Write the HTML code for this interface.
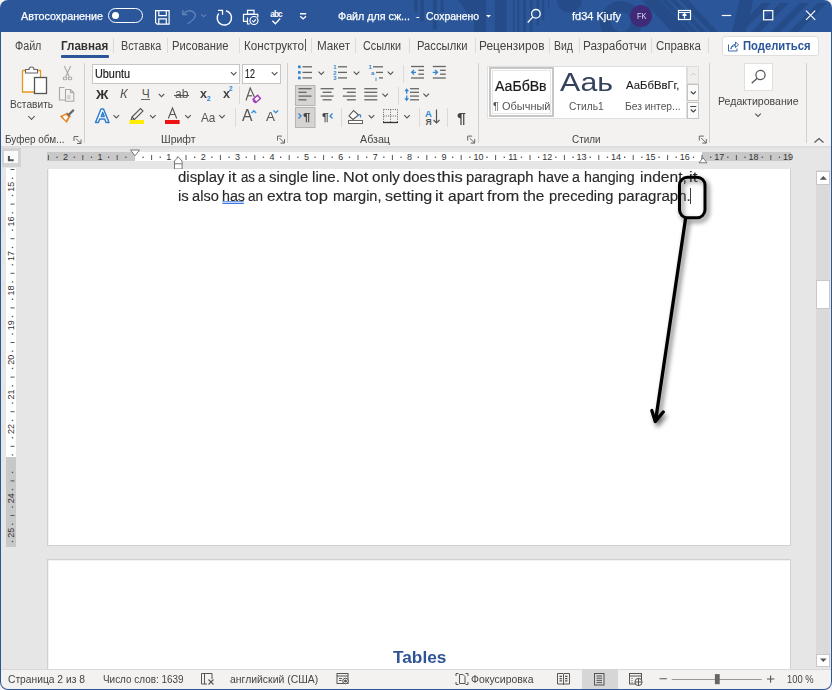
<!DOCTYPE html>
<html><head><meta charset="utf-8">
<style>

*{margin:0;padding:0;box-sizing:border-box}
html,body{width:832px;height:690px;overflow:hidden;background:#f3f3f3;font-family:"Liberation Sans",sans-serif}
.a{position:absolute}
.t{position:absolute;white-space:nowrap}
svg.i{position:absolute;overflow:visible}
.tsep{position:absolute;top:38px;width:1px;height:15px;background:#dddbd9}
.gsep{position:absolute;top:63px;width:1px;height:80px;background:#d2d0ce}
.isep{position:absolute;width:1px;background:#dcdad8}

</style></head><body>
<div class="a" style="left:0;top:0;width:832px;height:690px;background:#2b579a;border-radius:8px 8px 8px 8px"></div>
<svg class="i" style="left:0;top:0" width="832" height="32" viewBox="0 0 832 32">
<defs><clipPath id="tc"><rect x="0" y="0" width="832" height="40" rx="8"/></clipPath></defs>
<g clip-path="url(#tc)" fill="#254c89">
<rect x="414" y="0" width="3.8" height="12.6"/>
<rect x="420.2" y="0" width="3.8" height="21.5"/>
<rect x="432.8" y="0" width="4.2" height="29.6"/>
<rect x="440.4" y="0" width="3.3" height="12"/>
<path d="M458 0 H486 V32 H474 V22 Z"/>
<rect x="494.9" y="0" width="11.8" height="32"/>
<rect x="513" y="0" width="1.8" height="32"/><rect x="517" y="0" width="2.5" height="32"/><rect x="523" y="0" width="3" height="32"/>
<rect x="530" y="0" width="2.4" height="32"/><rect x="536.6" y="0" width="2.4" height="25"/><rect x="542" y="0" width="2.4" height="20"/><rect x="548" y="0" width="1.5" height="8"/>
<path d="M557 0 A12.3 12.3 0 0 0 581.6 0 Z"/>
<circle cx="621" cy="22" r="15.5" fill="none" stroke="#254c89" stroke-width="11"/>
<path d="M642 0 h18 l30 32 h-18 z"/>
<path d="M661 0 h6 l30 32 h-6 z"/><path d="M670 0 h6 l30 32 h-6 z"/><path d="M680 0 h8 l30 32 h-8 z"/>
<path d="M739.5 0 h13.5 q-3 16 -7 32 h-14.2 q4 -16 7.7 -32 z"/>
<path d="M762 3 h9 l-29 29 h-9 z"/><path d="M780 3 h9 l-29 29 h-9 z"/><path d="M800 3 h9 l-29 29 h-9 z"/><path d="M818 3 h9 l-29 29 h-9 z"/>
</g>
</svg>
<div class="a" style="left:1px;top:32px;width:830px;height:114px;background:#f3f2f1"></div>
<div class="a" style="left:1px;top:146px;width:830px;height:524px;background:#e6e6e6"></div>
<div class="t" style="left:20.60px;top:10.87px;font-size:11.5px;line-height:11.5px;color:#ffffff;font-family:'Liberation Sans',sans-serif;transform:scaleX(0.9353);transform-origin:0 0;-webkit-text-stroke:0.25px #fff;">Автосохранение</div>
<div class="a" style="left:108.2px;top:8.3px;width:34.6px;height:14.6px;border:1.3px solid #fff;border-radius:8px"></div>
<div class="a" style="left:111.8px;top:11.9px;width:7.4px;height:7.4px;background:#fff;border-radius:50%"></div>
<svg class="i" style="left:0;top:0" width="832" height="32">
<g fill="none" stroke="#fff" stroke-width="1.2">
<path d="M155.6 10.6 h13.5 v13.5 h-12 l-1.5 -1.5 z"/>
<path d="M158.8 10.6 v5 h7.5 v-5"/>
<path d="M158.8 24.1 v-5.2 h7.5 v5.2"/>
</g>
<g fill="none" stroke="#6283b8" stroke-width="1.3">
<path d="M183 14.5 C186 10.5 191 9.5 194 12.5 C197 15.5 195 19 187.5 24"/>
<path d="M182.8 10 v4.5 h4.5"/>
<path d="M201.2 14.4 l2.5 2.3 l2.5 -2.3" stroke-width="1.1"/>
</g>
<g fill="none" stroke="#fff" stroke-width="1.4">
<path d="M226 10.8 A7.2 7.2 0 1 1 218.6 13.5"/>
<path d="M218 10.3 h4.5 v4.5" stroke-width="1.3"/>
</g>
<g fill="none" stroke="#fff" stroke-width="1.2">
<rect x="247.5" y="10.3" width="6.5" height="4"/>
<path d="M247.5 21.3 h-4 v-7 h14.3 v3"/>
<path d="M247.5 17.5 v6.5 h2.5"/>
<circle cx="254" cy="20.5" r="4" fill="#2b579a"/>
<path d="M252.2 20.6 l1.3 1.3 l2.4 -2.4"/>
</g>
<text x="270.3" y="16.5" font-family="Liberation Sans" font-size="8.3" font-weight="bold" fill="#fff" textLength="12.4">abc</text>
<path d="M272.4 20.8 l3 2.9 l4.8 -5.2" fill="none" stroke="#fff" stroke-width="1.3"/>
<path d="M300 13.8 h6.2 M300.2 16.3 l2.9 2.6 l2.9 -2.6" fill="none" stroke="#fff" stroke-width="1.4"/>
<path d="M486 15 l2.5 2.5 l2.5 -2.5 z" fill="#fff"/>
<circle cx="535.9" cy="13.8" r="4.3" fill="none" stroke="#fff" stroke-width="1.3"/>
<path d="M532.9 16.9 l-5.2 5.6" stroke="#fff" stroke-width="1.3"/>
<g fill="none" stroke="#fff" stroke-width="1.2">
<rect x="678.5" y="10.5" width="12" height="9"/>
<path d="M678.5 12.5 h12 M684.5 18.5 v-5 M682.5 15.5 l2 -2 l2 2"/>
</g>
<path d="M721.8 15.5 h9.4" stroke="#fff" stroke-width="1.2"/>
<rect x="763.6" y="10.6" width="9.2" height="9.2" fill="none" stroke="#fff" stroke-width="1.2"/>
<path d="M806 10.6 l9.2 9.2 M815.2 10.6 l-9.2 9.2" stroke="#fff" stroke-width="1.2"/>
</svg>
<div class="t" style="left:338.00px;top:10.87px;font-size:11.5px;line-height:11.5px;color:#ffffff;font-family:'Liberation Sans',sans-serif;transform:scaleX(0.9294);transform-origin:0 0;-webkit-text-stroke:0.25px #fff;">Файл для сж...</div>
<div class="t" style="left:415.80px;top:10.87px;font-size:11.5px;line-height:11.5px;color:#ffffff;font-family:'Liberation Sans',sans-serif;">-</div>
<div class="t" style="left:426.00px;top:10.87px;font-size:11.5px;line-height:11.5px;color:#ffffff;font-family:'Liberation Sans',sans-serif;transform:scaleX(0.9043);transform-origin:0 0;-webkit-text-stroke:0.25px #fff;">Сохранено</div>
<div class="t" style="left:572.00px;top:10.87px;font-size:11.5px;line-height:11.5px;color:#ffffff;font-family:'Liberation Sans',sans-serif;transform:scaleX(0.9578);transform-origin:0 0;-webkit-text-stroke:0.25px #fff;">fd34 Kjufy</div>
<div class="a" style="left:630px;top:5px;width:22px;height:22px;border-radius:50%;background:#3f2a78"></div>
<div class="t" style="left:637.00px;top:11.98px;font-size:9px;line-height:9px;color:#e0d8ee;font-family:'Liberation Sans',sans-serif;transform:scaleX(0.8250);transform-origin:0 0;">FK</div>
<div class="t" style="left:15.00px;top:39.84px;font-size:12px;line-height:12px;color:#444;font-family:'Liberation Sans',sans-serif;transform:scaleX(0.8944);transform-origin:0 0;">Файл</div>
<div class="t" style="left:61.30px;top:39.84px;font-size:12px;line-height:12px;color:#333;font-weight:bold;font-family:'Liberation Sans',sans-serif;transform:scaleX(0.9690);transform-origin:0 0;">Главная</div>
<div class="a" style="left:61px;top:55px;width:48px;height:2.5px;background:#2b579a;border-radius:1px"></div>
<div class="t" style="left:120.60px;top:39.84px;font-size:12px;line-height:12px;color:#444;font-family:'Liberation Sans',sans-serif;transform:scaleX(0.9012);transform-origin:0 0;">Вставка</div>
<div class="t" style="left:172.40px;top:39.84px;font-size:12px;line-height:12px;color:#444;font-family:'Liberation Sans',sans-serif;transform:scaleX(0.9365);transform-origin:0 0;">Рисование</div>
<div class="t" style="left:243.60px;top:39.84px;font-size:12px;line-height:12px;color:#444;font-family:'Liberation Sans',sans-serif;transform:scaleX(0.9717);transform-origin:0 0;">Конструкто</div>
<div class="t" style="left:316.60px;top:39.84px;font-size:12px;line-height:12px;color:#444;font-family:'Liberation Sans',sans-serif;transform:scaleX(0.9744);transform-origin:0 0;">Макет</div>
<div class="t" style="left:362.90px;top:39.84px;font-size:12px;line-height:12px;color:#444;font-family:'Liberation Sans',sans-serif;transform:scaleX(0.9018);transform-origin:0 0;">Ссылки</div>
<div class="t" style="left:417.00px;top:39.84px;font-size:12px;line-height:12px;color:#444;font-family:'Liberation Sans',sans-serif;transform:scaleX(0.9358);transform-origin:0 0;">Рассылки</div>
<div class="t" style="left:479.00px;top:39.84px;font-size:12px;line-height:12px;color:#444;font-family:'Liberation Sans',sans-serif;transform:scaleX(0.9905);transform-origin:0 0;">Рецензиров</div>
<div class="t" style="left:553.60px;top:39.84px;font-size:12px;line-height:12px;color:#444;font-family:'Liberation Sans',sans-serif;transform:scaleX(0.8702);transform-origin:0 0;">Вид</div>
<div class="t" style="left:583.40px;top:39.84px;font-size:12px;line-height:12px;color:#444;font-family:'Liberation Sans',sans-serif;transform:scaleX(0.9809);transform-origin:0 0;">Разработчи</div>
<div class="t" style="left:656.30px;top:39.84px;font-size:12px;line-height:12px;color:#444;font-family:'Liberation Sans',sans-serif;transform:scaleX(0.9559);transform-origin:0 0;">Справка</div>
<div class="a" style="left:305px;top:39px;width:1px;height:12px;background:#555"></div>
<div class="tsep" style="left:113px"></div>
<div class="tsep" style="left:167px"></div>
<div class="tsep" style="left:239px"></div>
<div class="tsep" style="left:311px"></div>
<div class="tsep" style="left:355px"></div>
<div class="tsep" style="left:409px"></div>
<div class="tsep" style="left:475px"></div>
<div class="tsep" style="left:549px"></div>
<div class="tsep" style="left:579px"></div>
<div class="tsep" style="left:651px"></div>
<div class="tsep" style="left:708px"></div>
<div class="a" style="left:722px;top:36px;width:97px;height:20px;background:#fff;border:1px solid #e1dfdd;border-radius:3px"></div>
<div class="t" style="left:743.00px;top:39.84px;font-size:12px;line-height:12px;color:#2b579a;font-weight:bold;font-family:'Liberation Sans',sans-serif;transform:scaleX(0.9371);transform-origin:0 0;">Поделиться</div>
<svg class="i" style="left:0;top:0" width="832" height="60">
<g fill="none" stroke="#3b6aae" stroke-width="1">
<path d="M728.5 44.5 v6.5 h8.5 v-2.5"/><path d="M730.8 49 c0.4 -3 2.2 -4.6 4.7 -4.6 v-2.4 l3 2.8 l-3 2.8 v-2 c-2 0 -3.5 0.8 -4.7 3.4z"/>
</g></svg>
<svg class="i" style="left:0;top:0" width="832" height="150">
<path d="M22.5 70.5 h3 M37 70.5 h3.5 v21.5 h-18 v-21.5" fill="#fdfdfd" stroke="#e8961e" stroke-width="1.3"/>
<path d="M25.5 73 v-3.5 h3.5 a2.5 2.5 0 0 1 5 0 h3.5 v3.5 z" fill="#fdfdfd" stroke="#666" stroke-width="1.1"/>
<rect x="34.5" y="77.5" width="12" height="16" fill="#fdfdfd" stroke="#555" stroke-width="1.3"/>
<g fill="none" stroke="#a8a8a8" stroke-width="1.1">
<path d="M64.3 66 L69.3 76.8 M70.7 66 L65.7 76.8"/><ellipse cx="65" cy="78.4" rx="1.8" ry="1.4"/><ellipse cx="70" cy="78.4" rx="1.8" ry="1.4"/>
<path d="M64.5 87.5 h-5 v12.5 h5.5"/><path d="M65.5 89.5 h5 l3.3 3.3 v8.5 h-8.3 z M70.5 89.5 v3.3 h3.3"/>
</g>
<rect x="67.2" y="95" width="3.2" height="4.2" fill="#cfcfcf"/>
<path d="M73.8 109.8 L68.3 115.3" stroke="#666" stroke-width="2.3"/>
<path d="M66.5 113 l3.8 3.8" stroke="#666" stroke-width="1.5"/>
<path d="M59.8 116.2 L66.3 113.2 L70 117 L66.8 123 Z" fill="#e8861e"/>
<path d="M62.6 116.5 L66 114.9 L68.2 117.1 L65.8 120.6 Z" fill="#fff"/>
</svg>
<div class="t" style="left:10.40px;top:98.57px;font-size:11.5px;line-height:11.5px;color:#444;font-family:'Liberation Sans',sans-serif;transform:scaleX(0.8841);transform-origin:0 0;">Вставить</div>
<div class="a" style="left:29px;top:114px;width:5px;height:5px;border-right:1.2px solid #555;border-bottom:1.2px solid #555;transform:rotate(45deg)"></div>
<div class="t" style="left:5.00px;top:133.77px;font-size:11.5px;line-height:11.5px;color:#444;font-family:'Liberation Sans',sans-serif;transform:scaleX(0.8674);transform-origin:0 0;">Буфер обм...</div>
<div class="gsep" style="left:84px"></div>
<svg class="i" style="left:0;top:0" width="1" height="1"><g fill="none" stroke="#666" stroke-width="1">
<path d="M74.0 141 v-4.5 h4.5"/><path d="M76.0 138.5 l4.8 4.8 M81.0 139.5 v4 h-4"/></g></svg>
<div class="a" style="left:92px;top:64px;width:148px;height:20px;background:#fff;border:1px solid #c8c6c4"></div>
<div class="t" style="left:95.00px;top:67.64px;font-size:12px;line-height:12px;color:#222;font-family:'Liberation Sans',sans-serif;transform:scaleX(0.9043);transform-origin:0 0;-webkit-text-stroke:0.2px #222;">Ubuntu</div>
<svg class="i" style="left:0;top:0" width="1" height="1"><path d="M230.89999999999998 72.1 l2.8 2.8 l2.8 -2.8" fill="none" stroke="#555" stroke-width="1.1"/></svg>
<div class="a" style="left:242px;top:64px;width:39px;height:20px;background:#fff;border:1px solid #c8c6c4"></div>
<div class="t" style="left:245.00px;top:67.64px;font-size:12px;line-height:12px;color:#222;font-family:'Liberation Sans',sans-serif;transform:scaleX(0.7336);transform-origin:0 0;-webkit-text-stroke:0.2px #222;">12</div>
<svg class="i" style="left:0;top:0" width="1" height="1"><path d="M271.8 72.1 l2.8 2.8 l2.8 -2.8" fill="none" stroke="#555" stroke-width="1.1"/></svg>
<div class="t" style="left:95.80px;top:87.50px;font-size:13px;line-height:13px;color:#333;font-weight:bold;font-family:'Liberation Sans',sans-serif;transform:scaleX(1.0553);transform-origin:0 0;">Ж</div>
<div class="t" style="left:120.00px;top:87.92px;font-size:12.5px;line-height:12.5px;color:#555;font-family:'Liberation Sans',sans-serif;transform:scaleX(1.0278);transform-origin:0 0;font-style:italic;">К</div>
<div class="t" style="left:141.80px;top:88.14px;font-size:12px;line-height:12px;color:#555;font-family:'Liberation Sans',sans-serif;transform:scaleX(1.0000);transform-origin:0 0;">Ч</div>
<div class="a" style="left:141.3px;top:99px;width:9px;height:1px;background:#666"></div>
<svg class="i" style="left:0;top:0" width="1" height="1"><path d="M158.7 93.8 l2.8 2.8 l2.8 -2.8" fill="none" stroke="#555" stroke-width="1.1"/></svg>
<div class="t" style="left:174.50px;top:88.34px;font-size:12px;line-height:12px;color:#555;font-family:'Liberation Sans',sans-serif;transform:scaleX(1.0105);transform-origin:0 0;">ab</div>
<div class="a" style="left:174px;top:95px;width:15px;height:1.1px;background:#555"></div>
<div class="t" style="left:200.00px;top:87.84px;font-size:12px;line-height:12px;color:#444;font-weight:bold;font-family:'Liberation Sans',sans-serif;transform:scaleX(1.0467);transform-origin:0 0;">x</div>
<div class="t" style="left:206.80px;top:96.24px;font-size:6.8px;line-height:6.8px;color:#2f86d0;font-weight:bold;font-family:'Liberation Sans',sans-serif;">2</div>
<div class="t" style="left:222.50px;top:87.84px;font-size:12px;line-height:12px;color:#444;font-weight:bold;font-family:'Liberation Sans',sans-serif;transform:scaleX(1.0467);transform-origin:0 0;">x</div>
<div class="t" style="left:228.80px;top:86.24px;font-size:6.8px;line-height:6.8px;color:#2f86d0;font-weight:bold;font-family:'Liberation Sans',sans-serif;">2</div>
<div class="isep" style="left:239px;top:86px;height:18px"></div>
<svg class="i" style="left:0;top:0" width="1" height="1">
<path d="M246 100.5 l4.2 -12.5 l4.2 9" fill="none" stroke="#555" stroke-width="1.1"/><path d="M247.6 95.8 h4.5" stroke="#555" stroke-width="1.1"/>
<path d="M253 99.3 l4.6 -4 l2.8 3.2 l-4.6 4 z" fill="#fff" stroke="#a43dba" stroke-width="1.5"/>
<path d="M253.6 100.2 l1.8 2" stroke="#a43dba" stroke-width="2.6"/>
</svg>
<svg class="i" style="left:0;top:0" width="1" height="1">
<path d="M95.5 122.5 l5.5 -13.5 h2.5 l5.5 13.5 h-3 l-1.3 -3.4 h-5 l-1.3 3.4 z M101.2 116.5 h3 l-1.5 -4 z" fill="#fff" stroke="#2f7fd0" stroke-width="1.5" stroke-linejoin="round"/>
<path d="M132 117 l8.5 -8.5 l2.5 2.5 l-8.5 8.5 l-3.5 0.8z" fill="none" stroke="#555" stroke-width="1.1"/>
<path d="M132 117 l2.5 2.5" stroke="#555" stroke-width="1.1"/>
<rect x="129.5" y="120" width="14.5" height="4" fill="#ffee00"/>
<path d="M168.3 118.5 l4.2 -10.5 l4.2 10.5 M170 114.5 h5" fill="none" stroke="#555" stroke-width="1.1"/>
<rect x="165" y="120" width="14.6" height="4" fill="#ee1111"/>
</svg>
<svg class="i" style="left:0;top:0" width="1" height="1"><path d="M113.5 115.1 l2.8 2.8 l2.8 -2.8" fill="none" stroke="#555" stroke-width="1.1"/></svg>
<svg class="i" style="left:0;top:0" width="1" height="1"><path d="M150.0 115.1 l2.8 2.8 l2.8 -2.8" fill="none" stroke="#555" stroke-width="1.1"/></svg>
<svg class="i" style="left:0;top:0" width="1" height="1"><path d="M185.2 115.1 l2.8 2.8 l2.8 -2.8" fill="none" stroke="#555" stroke-width="1.1"/></svg>
<div class="t" style="left:201.00px;top:110.50px;font-size:13px;line-height:13px;color:#555;font-family:'Liberation Sans',sans-serif;transform:scaleX(0.9053);transform-origin:0 0;">Aa</div>
<svg class="i" style="left:0;top:0" width="1" height="1"><path d="M219.2 115.1 l2.8 2.8 l2.8 -2.8" fill="none" stroke="#555" stroke-width="1.1"/></svg>
<div class="isep" style="left:234.5px;top:107.5px;height:19px"></div>
<div class="t" style="left:242.40px;top:107.76px;font-size:16px;line-height:16px;color:#555;font-family:'Liberation Sans',sans-serif;transform:scaleX(0.9839);transform-origin:0 0;">A</div>
<svg class="i" style="left:0;top:0" width="1" height="1"><path d="M251.5 113 l2.3 -2.3 l2.3 2.3" fill="none" stroke="#3a96dd" stroke-width="1.5"/><path d="M273.5 110.5 l2.3 2.3 l2.3 -2.3" fill="none" stroke="#3a96dd" stroke-width="1.5"/></svg>
<div class="t" style="left:266.00px;top:110.30px;font-size:13px;line-height:13px;color:#555;font-family:'Liberation Sans',sans-serif;transform:scaleX(1.0378);transform-origin:0 0;">A</div>
<div class="t" style="left:161.30px;top:133.77px;font-size:11.5px;line-height:11.5px;color:#444;font-family:'Liberation Sans',sans-serif;transform:scaleX(0.9143);transform-origin:0 0;">Шрифт</div>
<svg class="i" style="left:0;top:0" width="1" height="1"><g fill="none" stroke="#666" stroke-width="1">
<path d="M277.5 140.6 v-4.5 h4.5"/><path d="M279.5 138.1 l4.8 4.8 M284.5 139.1 v4 h-4"/></g></svg>
<div class="gsep" style="left:287px"></div>
<svg class="i" style="left:0;top:0" width="1" height="1"><rect x="298" y="65.5" width="2.7" height="2.7" fill="#2f86d0"/><path d="M302.5 66.8 h9.5" stroke="#666" stroke-width="1.3"/><rect x="298" y="71.10000000000001" width="2.7" height="2.7" fill="#2f86d0"/><path d="M302.5 72.4 h9.5" stroke="#666" stroke-width="1.3"/><rect x="298" y="76.60000000000001" width="2.7" height="2.7" fill="#2f86d0"/><path d="M302.5 77.9 h9.5" stroke="#666" stroke-width="1.3"/><text x="333.2" y="69.0" font-family="Liberation Sans" font-size="5.8" font-weight="bold" fill="#2f86d0">1</text><path d="M338 66.8 h9" stroke="#666" stroke-width="1.3"/><text x="333.2" y="74.60000000000001" font-family="Liberation Sans" font-size="5.8" font-weight="bold" fill="#2f86d0">2</text><path d="M338 72.4 h9" stroke="#666" stroke-width="1.3"/><text x="333.2" y="80.10000000000001" font-family="Liberation Sans" font-size="5.8" font-weight="bold" fill="#2f86d0">3</text><path d="M338 77.9 h9" stroke="#666" stroke-width="1.3"/><text x="368.5" y="69" font-family="Liberation Sans" font-size="6" font-weight="bold" fill="#2f86d0">1</text><path d="M373 66.8 h10" stroke="#666" stroke-width="1.3"/><text x="371" y="74.8" font-family="Liberation Sans" font-size="6" font-weight="bold" fill="#2f86d0">a</text><path d="M376 72.4 h7" stroke="#666" stroke-width="1.3"/><text x="375" y="80.5" font-family="Liberation Sans" font-size="6" font-weight="bold" fill="#2f86d0">i</text><path d="M379 77.9 h4" stroke="#666" stroke-width="1.3"/><path d="M411 66.5 h13" stroke="#666" stroke-width="1.3"/><path d="M411 78 h13" stroke="#666" stroke-width="1.3"/><path d="M418.3 70.3 h5.7" stroke="#666" stroke-width="1.3"/><path d="M418.3 74.2 h5.7" stroke="#666" stroke-width="1.3"/><path d="M416 72.3 h-4.5 M414 70 l-2.3 2.3 l2.3 2.3" fill="none" stroke="#2f86d0" stroke-width="1.3"/><path d="M432.8 66.5 h13" stroke="#666" stroke-width="1.3"/><path d="M432.8 78 h13" stroke="#666" stroke-width="1.3"/><path d="M440.1 70.3 h5.7" stroke="#666" stroke-width="1.3"/><path d="M440.1 74.2 h5.7" stroke="#666" stroke-width="1.3"/><path d="M432.8 72.3 h4.5 M435.1 70 l2.3 2.3 l-2.3 2.3" fill="none" stroke="#2f86d0" stroke-width="1.3"/><rect x="295.5" y="85.5" width="19.5" height="20" fill="#d5d4d2" stroke="#b5b4b2" stroke-width="1"/><rect x="295.5" y="107.5" width="19.5" height="20" fill="#d5d4d2" stroke="#b5b4b2" stroke-width="1"/><path d="M298.5 88.7 h13" stroke="#666" stroke-width="1.3"/><path d="M298.5 92.3 h8" stroke="#666" stroke-width="1.3"/><path d="M298.5 96.1 h13" stroke="#666" stroke-width="1.3"/><path d="M298.5 99.8 h8" stroke="#666" stroke-width="1.3"/><path d="M320.6 88.7 h13" stroke="#666" stroke-width="1.3"/><path d="M322.6 92.3 h9" stroke="#666" stroke-width="1.3"/><path d="M320.6 96.1 h13" stroke="#666" stroke-width="1.3"/><path d="M322.6 99.8 h9" stroke="#666" stroke-width="1.3"/><path d="M342.8 88.7 h13" stroke="#666" stroke-width="1.3"/><path d="M346.8 92.3 h9" stroke="#666" stroke-width="1.3"/><path d="M342.8 96.1 h13" stroke="#666" stroke-width="1.3"/><path d="M346.8 99.8 h9" stroke="#666" stroke-width="1.3"/><path d="M364.3 88.7 h13" stroke="#666" stroke-width="1.3"/><path d="M364.3 92.3 h13" stroke="#666" stroke-width="1.3"/><path d="M364.3 96.1 h13" stroke="#666" stroke-width="1.3"/><path d="M364.3 99.8 h13" stroke="#666" stroke-width="1.3"/><path d="M410 88.7 h9" stroke="#666" stroke-width="1.3"/><path d="M410 92.3 h9" stroke="#666" stroke-width="1.3"/><path d="M410 96.1 h9" stroke="#666" stroke-width="1.3"/><path d="M410 99.8 h9" stroke="#666" stroke-width="1.3"/><path d="M406.7 93.8 v-3.5 M406.7 95.6 v3.5" fill="none" stroke="#2f86d0" stroke-width="1.3"/><path d="M404.3 91.3 l2.4 -3 l2.4 3 z M404.3 98.3 l2.4 3 l2.4 -3 z" fill="#2f86d0"/><path d="M298.5 113.5 l2.5 2.5 l-2.5 2.5" fill="none" stroke="#2f86d0" stroke-width="1.3"/><path d="M332.5 113.5 l-2.5 2.5 l2.5 2.5" fill="none" stroke="#2f86d0" stroke-width="1.3"/><path d="M353.5 110.5 l-4.5 5.5 l4 3.5 l5.5 -4.5 z" fill="#fff" stroke="#555" stroke-width="1.1"/><path d="M358.5 115 c1.5 -1 2.5 0 2 2.5" fill="none" stroke="#2f86d0" stroke-width="1.3"/><rect x="348.5" y="120.5" width="14" height="3" fill="#fff" stroke="#666" stroke-width="1"/><path d="M383.5 109.5 h14 M383.5 109.5 v13 M397.5 109.5 v13 M390.5 109.5 v13 M383.5 116 h14" fill="none" stroke="#666" stroke-width="1" stroke-dasharray="1 1.3"/><path d="M383 122.5 h15" stroke="#333" stroke-width="1.3"/><text x="425" y="116.5" font-family="Liberation Sans" font-size="9.5" font-weight="bold" fill="#2f86d0">A</text><text x="425.5" y="124.5" font-family="Liberation Sans" font-size="8.5" font-weight="bold" fill="#555">Я</text><path d="M436.5 109.5 v13.5 M433.5 120 l3 3 l3 -3" fill="none" stroke="#555" stroke-width="1.2"/></svg>
<svg class="i" style="left:0;top:0" width="1" height="1"><path d="M318.5 71.6 l2.8 2.8 l2.8 -2.8" fill="none" stroke="#555" stroke-width="1.1"/></svg>
<svg class="i" style="left:0;top:0" width="1" height="1"><path d="M353.7 71.6 l2.8 2.8 l2.8 -2.8" fill="none" stroke="#555" stroke-width="1.1"/></svg>
<svg class="i" style="left:0;top:0" width="1" height="1"><path d="M387.7 71.6 l2.8 2.8 l2.8 -2.8" fill="none" stroke="#555" stroke-width="1.1"/></svg>
<div class="isep" style="left:403px;top:64.5px;height:18px"></div>
<svg class="i" style="left:0;top:0" width="1" height="1"><path d="M382.4 93.6 l2.8 2.8 l2.8 -2.8" fill="none" stroke="#555" stroke-width="1.1"/></svg>
<div class="isep" style="left:397.5px;top:86.5px;height:18px"></div>
<svg class="i" style="left:0;top:0" width="1" height="1"><path d="M423.4 93.6 l2.8 2.8 l2.8 -2.8" fill="none" stroke="#555" stroke-width="1.1"/></svg>
<div class="t" style="left:302.80px;top:111.61px;font-size:10.5px;line-height:10.5px;color:#444;font-weight:bold;font-family:'Liberation Sans',sans-serif;transform:scaleX(1.2834);transform-origin:0 0;">¶</div>
<div class="t" style="left:321.80px;top:111.61px;font-size:10.5px;line-height:10.5px;color:#444;font-weight:bold;font-family:'Liberation Sans',sans-serif;transform:scaleX(1.1636);transform-origin:0 0;">¶</div>
<div class="isep" style="left:341px;top:108px;height:18.5px"></div>
<svg class="i" style="left:0;top:0" width="1" height="1"><path d="M368.7 115.1 l2.8 2.8 l2.8 -2.8" fill="none" stroke="#555" stroke-width="1.1"/></svg>
<svg class="i" style="left:0;top:0" width="1" height="1"><path d="M404.2 115.1 l2.8 2.8 l2.8 -2.8" fill="none" stroke="#555" stroke-width="1.1"/></svg>
<div class="isep" style="left:418.5px;top:108px;height:18.5px"></div>
<div class="isep" style="left:446.5px;top:108px;height:18.5px"></div>
<div class="t" style="left:456.60px;top:110.65px;font-size:14px;line-height:14px;color:#444;font-weight:bold;font-family:'Liberation Sans',sans-serif;transform:scaleX(1.1415);transform-origin:0 0;">¶</div>
<div class="t" style="left:360.00px;top:133.77px;font-size:11.5px;line-height:11.5px;color:#444;font-family:'Liberation Sans',sans-serif;transform:scaleX(0.9298);transform-origin:0 0;">Абзац</div>
<svg class="i" style="left:0;top:0" width="1" height="1"><g fill="none" stroke="#666" stroke-width="1">
<path d="M467.7 140.6 v-4.5 h4.5"/><path d="M469.7 138.1 l4.8 4.8 M474.7 139.1 v4 h-4"/></g></svg>
<div class="gsep" style="left:477.5px"></div>
<div class="a" style="left:487px;top:65.5px;width:200px;height:53.5px;background:#fff;border:1px solid #e1dfdd"></div>
<div class="a" style="left:488.5px;top:67.3px;width:65.3px;height:50.2px;border:2px solid #c6c6c6;box-shadow:inset 0 0 0 1px #fff,inset 0 0 0 2px #e6e6e6"></div>
<div class="t" style="left:494.50px;top:79.25px;font-size:14px;line-height:14px;color:#1a1a1a;font-family:'Liberation Sans',sans-serif;transform:scaleX(1.0065);transform-origin:0 0;-webkit-text-stroke:0.2px #1a1a1a;">АаБбВв</div>
<div class="t" style="left:492.50px;top:101.27px;font-size:11.5px;line-height:11.5px;color:#555;font-family:'Liberation Sans',sans-serif;transform:scaleX(0.9551);transform-origin:0 0;">¶ Обычный</div>
<div class="t" style="left:560.20px;top:68.59px;font-size:26px;line-height:26px;color:#35445c;font-family:'Liberation Sans',sans-serif;transform:scaleX(1.1634);transform-origin:0 0;">Ааь</div>
<div class="t" style="left:568.80px;top:101.27px;font-size:11.5px;line-height:11.5px;color:#555;font-family:'Liberation Sans',sans-serif;transform:scaleX(0.8876);transform-origin:0 0;">Стиль1</div>
<div class="t" style="left:625.60px;top:79.87px;font-size:11.5px;line-height:11.5px;color:#1a1a1a;font-family:'Liberation Sans',sans-serif;transform:scaleX(0.9848);transform-origin:0 0;-webkit-text-stroke:0.1px #1a1a1a;">АаБбВвГг,</div>
<div class="t" style="left:624.60px;top:101.27px;font-size:11.5px;line-height:11.5px;color:#555;font-family:'Liberation Sans',sans-serif;transform:scaleX(0.8903);transform-origin:0 0;">Без интер...</div>
<div class="a" style="left:686.7px;top:65.5px;width:12.7px;height:18px;background:#f0efee;border:1px solid #dedcda"></div>
<div class="a" style="left:686.7px;top:84.1px;width:12.7px;height:16.5px;background:#fafafa;border:1px solid #c6c4c2"></div>
<div class="a" style="left:686.7px;top:101.5px;width:12.7px;height:17.2px;background:#fafafa;border:1px solid #c6c4c2"></div>
<svg class="i" style="left:0;top:0" width="1" height="1">
<path d="M690.8 75.5 l2.5 -2.5 l2.5 2.5" fill="none" stroke="#c8c8c8" stroke-width="1"/>
<path d="M690.8 91.5 l2.5 2.5 l2.5 -2.5" fill="none" stroke="#444" stroke-width="1.1"/>
<path d="M690.3 106.5 h6 M690.8 109.5 l2.5 2.5 l2.5 -2.5" fill="none" stroke="#444" stroke-width="1.1"/>
</svg>
<div class="t" style="left:571.50px;top:133.77px;font-size:11.5px;line-height:11.5px;color:#444;font-family:'Liberation Sans',sans-serif;transform:scaleX(0.8600);transform-origin:0 0;">Стили</div>
<svg class="i" style="left:0;top:0" width="1" height="1"><g fill="none" stroke="#666" stroke-width="1">
<path d="M699.3 140.6 v-4.5 h4.5"/><path d="M701.3 138.1 l4.8 4.8 M706.3 139.1 v4 h-4"/></g></svg>
<div class="gsep" style="left:709px"></div>
<div class="a" style="left:744px;top:63px;width:29px;height:27.5px;background:#fff;border:1px solid #e1dfdd"></div>
<svg class="i" style="left:0;top:0" width="1" height="1">
<circle cx="760.5" cy="75" r="4.6" fill="none" stroke="#555" stroke-width="1.2"/>
<path d="M757.2 78.3 l-5.5 5" stroke="#555" stroke-width="1.3"/>
<path d="M814.5 142.5 l4.5 -4 l4.5 4" fill="none" stroke="#555" stroke-width="1.2"/>
</svg>
<div class="t" style="left:717.80px;top:96.27px;font-size:11.5px;line-height:11.5px;color:#444;font-family:'Liberation Sans',sans-serif;transform:scaleX(0.9200);transform-origin:0 0;">Редактирование</div>
<svg class="i" style="left:0;top:0" width="1" height="1"><path d="M755.2 113.6 l2.8 2.8 l2.8 -2.8" fill="none" stroke="#555" stroke-width="1.1"/></svg>
<div class="gsep" style="left:806px"></div>
<div class="a" style="left:1px;top:146px;width:830px;height:3px;background:linear-gradient(#d9d9d9,#e6e6e6)"></div>
<div class="a" style="left:2px;top:148px;width:19px;height:18.5px;background:#d3d3d3"></div>
<div class="a" style="left:4.3px;top:151px;width:13.4px;height:12.3px;background:#fafafa"></div>
<svg class="i" style="left:0;top:0" width="1" height="1"><path d="M8.9 156 v4.3 h4.8" fill="none" stroke="#555" stroke-width="2"/></svg>
<div class="a" style="left:46.5px;top:152.3px;width:744px;height:9px;background:#c8c8c8"></div>
<div class="a" style="left:134.5px;top:152.3px;width:567px;height:9px;background:#fff"></div>
<svg class="i" style="left:0;top:0" width="1" height="1"><path d="M48.4 155 v5" stroke="#555" stroke-width="1"/><rect x="56.4" y="156.6" width="1.3" height="1.4" fill="#555"/><text x="65.6" y="160.2" text-anchor="middle" font-family="Liberation Sans" font-size="9" fill="#333">2</text><rect x="73.6" y="156.6" width="1.3" height="1.4" fill="#555"/><path d="M82.8 155 v5" stroke="#555" stroke-width="1"/><rect x="90.8" y="156.6" width="1.3" height="1.4" fill="#555"/><text x="100.0" y="160.2" text-anchor="middle" font-family="Liberation Sans" font-size="9" fill="#333">1</text><rect x="108.0" y="156.6" width="1.3" height="1.4" fill="#555"/><path d="M117.2 155 v5" stroke="#555" stroke-width="1"/><rect x="125.2" y="156.6" width="1.3" height="1.4" fill="#555"/><rect x="142.4" y="156.6" width="1.3" height="1.4" fill="#555"/><path d="M151.6 155 v5" stroke="#555" stroke-width="1"/><rect x="159.6" y="156.6" width="1.3" height="1.4" fill="#555"/><text x="168.8" y="160.2" text-anchor="middle" font-family="Liberation Sans" font-size="9" fill="#333">1</text><rect x="176.8" y="156.6" width="1.3" height="1.4" fill="#555"/><path d="M186.0 155 v5" stroke="#555" stroke-width="1"/><rect x="194.0" y="156.6" width="1.3" height="1.4" fill="#555"/><text x="203.2" y="160.2" text-anchor="middle" font-family="Liberation Sans" font-size="9" fill="#333">2</text><rect x="211.2" y="156.6" width="1.3" height="1.4" fill="#555"/><path d="M220.4 155 v5" stroke="#555" stroke-width="1"/><rect x="228.4" y="156.6" width="1.3" height="1.4" fill="#555"/><text x="237.6" y="160.2" text-anchor="middle" font-family="Liberation Sans" font-size="9" fill="#333">3</text><rect x="245.6" y="156.6" width="1.3" height="1.4" fill="#555"/><path d="M254.8 155 v5" stroke="#555" stroke-width="1"/><rect x="262.8" y="156.6" width="1.3" height="1.4" fill="#555"/><text x="272.0" y="160.2" text-anchor="middle" font-family="Liberation Sans" font-size="9" fill="#333">4</text><rect x="280.0" y="156.6" width="1.3" height="1.4" fill="#555"/><path d="M289.2 155 v5" stroke="#555" stroke-width="1"/><rect x="297.2" y="156.6" width="1.3" height="1.4" fill="#555"/><text x="306.4" y="160.2" text-anchor="middle" font-family="Liberation Sans" font-size="9" fill="#333">5</text><rect x="314.4" y="156.6" width="1.3" height="1.4" fill="#555"/><path d="M323.6 155 v5" stroke="#555" stroke-width="1"/><rect x="331.6" y="156.6" width="1.3" height="1.4" fill="#555"/><text x="340.8" y="160.2" text-anchor="middle" font-family="Liberation Sans" font-size="9" fill="#333">6</text><rect x="348.8" y="156.6" width="1.3" height="1.4" fill="#555"/><path d="M358.0 155 v5" stroke="#555" stroke-width="1"/><rect x="366.0" y="156.6" width="1.3" height="1.4" fill="#555"/><text x="375.2" y="160.2" text-anchor="middle" font-family="Liberation Sans" font-size="9" fill="#333">7</text><rect x="383.2" y="156.6" width="1.3" height="1.4" fill="#555"/><path d="M392.4 155 v5" stroke="#555" stroke-width="1"/><rect x="400.4" y="156.6" width="1.3" height="1.4" fill="#555"/><text x="409.6" y="160.2" text-anchor="middle" font-family="Liberation Sans" font-size="9" fill="#333">8</text><rect x="417.6" y="156.6" width="1.3" height="1.4" fill="#555"/><path d="M426.8 155 v5" stroke="#555" stroke-width="1"/><rect x="434.8" y="156.6" width="1.3" height="1.4" fill="#555"/><text x="444.0" y="160.2" text-anchor="middle" font-family="Liberation Sans" font-size="9" fill="#333">9</text><rect x="452.0" y="156.6" width="1.3" height="1.4" fill="#555"/><path d="M461.2 155 v5" stroke="#555" stroke-width="1"/><rect x="469.2" y="156.6" width="1.3" height="1.4" fill="#555"/><text x="478.4" y="160.2" text-anchor="middle" font-family="Liberation Sans" font-size="9" fill="#333">10</text><rect x="486.4" y="156.6" width="1.3" height="1.4" fill="#555"/><path d="M495.6 155 v5" stroke="#555" stroke-width="1"/><rect x="503.6" y="156.6" width="1.3" height="1.4" fill="#555"/><text x="512.8" y="160.2" text-anchor="middle" font-family="Liberation Sans" font-size="9" fill="#333">11</text><rect x="520.8" y="156.6" width="1.3" height="1.4" fill="#555"/><path d="M530.0 155 v5" stroke="#555" stroke-width="1"/><rect x="538.0" y="156.6" width="1.3" height="1.4" fill="#555"/><text x="547.2" y="160.2" text-anchor="middle" font-family="Liberation Sans" font-size="9" fill="#333">12</text><rect x="555.2" y="156.6" width="1.3" height="1.4" fill="#555"/><path d="M564.4 155 v5" stroke="#555" stroke-width="1"/><rect x="572.4" y="156.6" width="1.3" height="1.4" fill="#555"/><text x="581.6" y="160.2" text-anchor="middle" font-family="Liberation Sans" font-size="9" fill="#333">13</text><rect x="589.6" y="156.6" width="1.3" height="1.4" fill="#555"/><path d="M598.8 155 v5" stroke="#555" stroke-width="1"/><rect x="606.8" y="156.6" width="1.3" height="1.4" fill="#555"/><text x="616.0" y="160.2" text-anchor="middle" font-family="Liberation Sans" font-size="9" fill="#333">14</text><rect x="624.0" y="156.6" width="1.3" height="1.4" fill="#555"/><path d="M633.2 155 v5" stroke="#555" stroke-width="1"/><rect x="641.2" y="156.6" width="1.3" height="1.4" fill="#555"/><text x="650.4" y="160.2" text-anchor="middle" font-family="Liberation Sans" font-size="9" fill="#333">15</text><rect x="658.4" y="156.6" width="1.3" height="1.4" fill="#555"/><path d="M667.6 155 v5" stroke="#555" stroke-width="1"/><rect x="675.6" y="156.6" width="1.3" height="1.4" fill="#555"/><text x="684.8" y="160.2" text-anchor="middle" font-family="Liberation Sans" font-size="9" fill="#333">16</text><rect x="692.8" y="156.6" width="1.3" height="1.4" fill="#555"/><path d="M702.0 155 v5" stroke="#555" stroke-width="1"/><rect x="710.0" y="156.6" width="1.3" height="1.4" fill="#555"/><text x="719.2" y="160.2" text-anchor="middle" font-family="Liberation Sans" font-size="9" fill="#333">17</text><rect x="727.2" y="156.6" width="1.3" height="1.4" fill="#555"/><path d="M736.4 155 v5" stroke="#555" stroke-width="1"/><rect x="744.4" y="156.6" width="1.3" height="1.4" fill="#555"/><text x="753.6" y="160.2" text-anchor="middle" font-family="Liberation Sans" font-size="9" fill="#333">18</text><rect x="761.6" y="156.6" width="1.3" height="1.4" fill="#555"/><path d="M770.8 155 v5" stroke="#555" stroke-width="1"/><rect x="778.8" y="156.6" width="1.3" height="1.4" fill="#555"/><text x="788.0" y="160.2" text-anchor="middle" font-family="Liberation Sans" font-size="9" fill="#333">19</text><path d="M130.5 150 h9 l-4.5 5.8 z" fill="#fff" stroke="#777" stroke-width="1"/><path d="M174.5 161 l3.8 -4 l3.8 4 v8 h-7.6 z M174.5 163.8 h7.6" fill="#fff" stroke="#777" stroke-width="1"/><path d="M699 162.8 l4 -5 l4 5 z" fill="#fff" stroke="#777" stroke-width="1"/></svg>
<div class="a" style="left:5.5px;top:168px;width:10px;height:290px;background:#fff"></div>
<div class="a" style="left:5.5px;top:457px;width:10px;height:90px;background:#c8c8c8"></div>
<svg class="i" style="left:0;top:0" width="1" height="1"><path d="M10.5 169.5 h4" stroke="#555" stroke-width="1"/><rect x="11.8" y="177.6" width="1.4" height="1.3" fill="#555"/><text x="0" y="0" transform="translate(13.8 186.8) rotate(-90)" text-anchor="middle" font-family="Liberation Sans" font-size="9" fill="#333">15</text><rect x="11.8" y="194.8" width="1.4" height="1.3" fill="#555"/><path d="M10.5 204.1 h4" stroke="#555" stroke-width="1"/><rect x="11.8" y="212.2" width="1.4" height="1.3" fill="#555"/><text x="0" y="0" transform="translate(13.8 221.4) rotate(-90)" text-anchor="middle" font-family="Liberation Sans" font-size="9" fill="#333">16</text><rect x="11.8" y="229.5" width="1.4" height="1.3" fill="#555"/><path d="M10.5 238.7 h4" stroke="#555" stroke-width="1"/><rect x="11.8" y="246.8" width="1.4" height="1.3" fill="#555"/><text x="0" y="0" transform="translate(13.8 256.0) rotate(-90)" text-anchor="middle" font-family="Liberation Sans" font-size="9" fill="#333">17</text><rect x="11.8" y="264.1" width="1.4" height="1.3" fill="#555"/><path d="M10.5 273.3 h4" stroke="#555" stroke-width="1"/><rect x="11.8" y="281.3" width="1.4" height="1.3" fill="#555"/><text x="0" y="0" transform="translate(13.8 290.6) rotate(-90)" text-anchor="middle" font-family="Liberation Sans" font-size="9" fill="#333">18</text><rect x="11.8" y="298.7" width="1.4" height="1.3" fill="#555"/><path d="M10.5 307.9 h4" stroke="#555" stroke-width="1"/><rect x="11.8" y="315.9" width="1.4" height="1.3" fill="#555"/><text x="0" y="0" transform="translate(13.8 325.2) rotate(-90)" text-anchor="middle" font-family="Liberation Sans" font-size="9" fill="#333">19</text><rect x="11.8" y="333.3" width="1.4" height="1.3" fill="#555"/><path d="M10.5 342.5 h4" stroke="#555" stroke-width="1"/><rect x="11.8" y="350.6" width="1.4" height="1.3" fill="#555"/><text x="0" y="0" transform="translate(13.8 359.8) rotate(-90)" text-anchor="middle" font-family="Liberation Sans" font-size="9" fill="#333">20</text><rect x="11.8" y="367.8" width="1.4" height="1.3" fill="#555"/><path d="M10.5 377.1 h4" stroke="#555" stroke-width="1"/><rect x="11.8" y="385.2" width="1.4" height="1.3" fill="#555"/><text x="0" y="0" transform="translate(13.8 394.4) rotate(-90)" text-anchor="middle" font-family="Liberation Sans" font-size="9" fill="#333">21</text><rect x="11.8" y="402.4" width="1.4" height="1.3" fill="#555"/><path d="M10.5 411.7 h4" stroke="#555" stroke-width="1"/><rect x="11.8" y="419.8" width="1.4" height="1.3" fill="#555"/><text x="0" y="0" transform="translate(13.8 429.0) rotate(-90)" text-anchor="middle" font-family="Liberation Sans" font-size="9" fill="#333">22</text><rect x="11.8" y="437.1" width="1.4" height="1.3" fill="#555"/><path d="M10.5 446.3 h4" stroke="#555" stroke-width="1"/><rect x="11.8" y="454.3" width="1.4" height="1.3" fill="#555"/><rect x="11.8" y="471.7" width="1.4" height="1.3" fill="#555"/><path d="M10.5 480.9 h4" stroke="#555" stroke-width="1"/><rect x="11.8" y="488.9" width="1.4" height="1.3" fill="#555"/><text x="0" y="0" transform="translate(13.8 498.2) rotate(-90)" text-anchor="middle" font-family="Liberation Sans" font-size="9" fill="#333">24</text><rect x="11.8" y="506.3" width="1.4" height="1.3" fill="#555"/><path d="M10.5 515.5 h4" stroke="#555" stroke-width="1"/><rect x="11.8" y="523.6" width="1.4" height="1.3" fill="#555"/><text x="0" y="0" transform="translate(13.8 532.8) rotate(-90)" text-anchor="middle" font-family="Liberation Sans" font-size="9" fill="#333">25</text><rect x="11.8" y="540.9" width="1.4" height="1.3" fill="#555"/></svg>
<div class="a" style="left:47px;top:169px;width:744px;height:377px;background:#fff;border:1px solid #d0d0d0;border-top:none;box-shadow:inset 1px 0 0 #f2f2f2"></div>
<div class="a" style="left:47px;top:558.5px;width:744px;height:120px;background:#fff;border:1px solid #d0d0d0;border-bottom:none;box-shadow:inset 1px 1px 0 #f2f2f2"></div>
<div class="t" style="left:178.40px;top:169.13px;font-size:15.2px;line-height:15.2px;color:#2a2a2a;font-family:'Liberation Sans',sans-serif;transform:scaleX(0.9835);transform-origin:0 0;-webkit-text-stroke:0.15px #2a2a2a;">display</div>
<div class="t" style="left:227.80px;top:169.13px;font-size:15.2px;line-height:15.2px;color:#2a2a2a;font-family:'Liberation Sans',sans-serif;transform:scaleX(1.1000);transform-origin:0 0;-webkit-text-stroke:0.15px #2a2a2a;">it</div>
<div class="t" style="left:241.10px;top:169.13px;font-size:15.2px;line-height:15.2px;color:#2a2a2a;font-family:'Liberation Sans',sans-serif;transform:scaleX(0.8724);transform-origin:0 0;-webkit-text-stroke:0.15px #2a2a2a;">as</div>
<div class="t" style="left:258.30px;top:169.13px;font-size:15.2px;line-height:15.2px;color:#2a2a2a;font-family:'Liberation Sans',sans-serif;transform:scaleX(0.8754);transform-origin:0 0;-webkit-text-stroke:0.15px #2a2a2a;">a</div>
<div class="t" style="left:269.00px;top:169.13px;font-size:15.2px;line-height:15.2px;color:#2a2a2a;font-family:'Liberation Sans',sans-serif;transform:scaleX(0.9902);transform-origin:0 0;-webkit-text-stroke:0.15px #2a2a2a;">single</div>
<div class="t" style="left:312.30px;top:169.13px;font-size:15.2px;line-height:15.2px;color:#2a2a2a;font-family:'Liberation Sans',sans-serif;transform:scaleX(1.0009);transform-origin:0 0;-webkit-text-stroke:0.15px #2a2a2a;">line.</div>
<div class="t" style="left:343.10px;top:169.13px;font-size:15.2px;line-height:15.2px;color:#2a2a2a;font-family:'Liberation Sans',sans-serif;transform:scaleX(1.0702);transform-origin:0 0;-webkit-text-stroke:0.15px #2a2a2a;">Not</div>
<div class="t" style="left:371.90px;top:169.13px;font-size:15.2px;line-height:15.2px;color:#2a2a2a;font-family:'Liberation Sans',sans-serif;transform:scaleX(1.0009);transform-origin:0 0;-webkit-text-stroke:0.15px #2a2a2a;">only</div>
<div class="t" style="left:403.30px;top:169.13px;font-size:15.2px;line-height:15.2px;color:#2a2a2a;font-family:'Liberation Sans',sans-serif;transform:scaleX(0.9776);transform-origin:0 0;-webkit-text-stroke:0.15px #2a2a2a;">does</div>
<div class="t" style="left:437.40px;top:169.13px;font-size:15.2px;line-height:15.2px;color:#2a2a2a;font-family:'Liberation Sans',sans-serif;transform:scaleX(1.0913);transform-origin:0 0;-webkit-text-stroke:0.15px #2a2a2a;">this</div>
<div class="t" style="left:466.10px;top:169.13px;font-size:15.2px;line-height:15.2px;color:#2a2a2a;font-family:'Liberation Sans',sans-serif;transform:scaleX(0.9733);transform-origin:0 0;-webkit-text-stroke:0.15px #2a2a2a;">paragraph</div>
<div class="t" style="left:537.60px;top:169.13px;font-size:15.2px;line-height:15.2px;color:#2a2a2a;font-family:'Liberation Sans',sans-serif;transform:scaleX(0.9442);transform-origin:0 0;-webkit-text-stroke:0.15px #2a2a2a;">have</div>
<div class="t" style="left:572.20px;top:169.13px;font-size:15.2px;line-height:15.2px;color:#2a2a2a;font-family:'Liberation Sans',sans-serif;transform:scaleX(0.9346);transform-origin:0 0;-webkit-text-stroke:0.15px #2a2a2a;">a</div>
<div class="t" style="left:583.50px;top:169.13px;font-size:15.2px;line-height:15.2px;color:#2a2a2a;font-family:'Liberation Sans',sans-serif;transform:scaleX(0.9360);transform-origin:0 0;-webkit-text-stroke:0.15px #2a2a2a;">hanging</div>
<div class="t" style="left:639.70px;top:169.13px;font-size:15.2px;line-height:15.2px;color:#2a2a2a;font-family:'Liberation Sans',sans-serif;transform:scaleX(1.0261);transform-origin:0 0;-webkit-text-stroke:0.15px #2a2a2a;">indent,</div>
<div class="t" style="left:688.90px;top:169.13px;font-size:15.2px;line-height:15.2px;color:#2a2a2a;font-family:'Liberation Sans',sans-serif;transform:scaleX(1.1000);transform-origin:0 0;-webkit-text-stroke:0.15px #2a2a2a;">it</div>
<div class="t" style="left:178.40px;top:187.83px;font-size:15.2px;line-height:15.2px;color:#2a2a2a;font-family:'Liberation Sans',sans-serif;transform:scaleX(0.9846);transform-origin:0 0;-webkit-text-stroke:0.15px #2a2a2a;">is</div>
<div class="t" style="left:192.10px;top:187.83px;font-size:15.2px;line-height:15.2px;color:#2a2a2a;font-family:'Liberation Sans',sans-serif;transform:scaleX(0.9650);transform-origin:0 0;-webkit-text-stroke:0.15px #2a2a2a;">also</div>
<div class="t" style="left:221.90px;top:187.83px;font-size:15.2px;line-height:15.2px;color:#2a2a2a;font-family:'Liberation Sans',sans-serif;transform:scaleX(0.9388);transform-origin:0 0;-webkit-text-stroke:0.15px #2a2a2a;">has</div>
<div class="t" style="left:247.90px;top:187.83px;font-size:15.2px;line-height:15.2px;color:#2a2a2a;font-family:'Liberation Sans',sans-serif;transform:scaleX(0.8872);transform-origin:0 0;-webkit-text-stroke:0.15px #2a2a2a;">an</div>
<div class="t" style="left:267.40px;top:187.83px;font-size:15.2px;line-height:15.2px;color:#2a2a2a;font-family:'Liberation Sans',sans-serif;transform:scaleX(1.0188);transform-origin:0 0;-webkit-text-stroke:0.15px #2a2a2a;">extra</div>
<div class="t" style="left:305.30px;top:187.83px;font-size:15.2px;line-height:15.2px;color:#2a2a2a;font-family:'Liberation Sans',sans-serif;transform:scaleX(1.0888);transform-origin:0 0;-webkit-text-stroke:0.15px #2a2a2a;">top</div>
<div class="t" style="left:332.90px;top:187.83px;font-size:15.2px;line-height:15.2px;color:#2a2a2a;font-family:'Liberation Sans',sans-serif;transform:scaleX(0.9574);transform-origin:0 0;-webkit-text-stroke:0.15px #2a2a2a;">margin,</div>
<div class="t" style="left:384.90px;top:187.83px;font-size:15.2px;line-height:15.2px;color:#2a2a2a;font-family:'Liberation Sans',sans-serif;transform:scaleX(1.0570);transform-origin:0 0;-webkit-text-stroke:0.15px #2a2a2a;">setting</div>
<div class="t" style="left:435.30px;top:187.83px;font-size:15.2px;line-height:15.2px;color:#2a2a2a;font-family:'Liberation Sans',sans-serif;transform:scaleX(1.1000);transform-origin:0 0;-webkit-text-stroke:0.15px #2a2a2a;">it</div>
<div class="t" style="left:448.20px;top:187.83px;font-size:15.2px;line-height:15.2px;color:#2a2a2a;font-family:'Liberation Sans',sans-serif;transform:scaleX(1.0253);transform-origin:0 0;-webkit-text-stroke:0.15px #2a2a2a;">apart</div>
<div class="t" style="left:486.60px;top:187.83px;font-size:15.2px;line-height:15.2px;color:#2a2a2a;font-family:'Liberation Sans',sans-serif;transform:scaleX(1.0634);transform-origin:0 0;-webkit-text-stroke:0.15px #2a2a2a;">from</div>
<div class="t" style="left:523.00px;top:187.83px;font-size:15.2px;line-height:15.2px;color:#2a2a2a;font-family:'Liberation Sans',sans-serif;transform:scaleX(1.0130);transform-origin:0 0;-webkit-text-stroke:0.15px #2a2a2a;">the</div>
<div class="t" style="left:548.90px;top:187.83px;font-size:15.2px;line-height:15.2px;color:#2a2a2a;font-family:'Liberation Sans',sans-serif;transform:scaleX(0.9652);transform-origin:0 0;-webkit-text-stroke:0.15px #2a2a2a;">preceding</div>
<div class="t" style="left:618.20px;top:187.83px;font-size:15.2px;line-height:15.2px;color:#2a2a2a;font-family:'Liberation Sans',sans-serif;transform:scaleX(0.9895);transform-origin:0 0;-webkit-text-stroke:0.15px #2a2a2a;">paragraph.</div>
<svg class="i" style="left:0;top:0" width="1" height="1"><path d="M222.3 201.8 h21.5 M222.3 203.5 h21.5" stroke="#3f7ae0" stroke-width="1"/></svg>
<div class="a" style="left:690px;top:188px;width:1px;height:16px;background:#222"></div>
<div class="t" style="left:392.50px;top:648.51px;font-size:17px;line-height:17px;color:#2f5496;font-weight:bold;font-family:'Liberation Sans',sans-serif;transform:scaleX(1.0153);transform-origin:0 0;">Tables</div>
<svg class="i" style="left:0;top:0" width="832" height="690">
<defs><filter id="sh" x="-50%" y="-50%" width="200%" height="200%"><feGaussianBlur stdDeviation="2.5"/></filter></defs>
<g opacity="0.6" filter="url(#sh)" transform="translate(2.5 3)">
<rect x="679.5" y="177.2" width="25.5" height="40.6" rx="8" fill="none" stroke="#000" stroke-width="3"/>
<path d="M685.5 219 L655.5 421 M651.8 410.5 L655.3 421.5 L663.3 412" fill="none" stroke="#000" stroke-width="3.3"/>
</g>
<rect x="679.5" y="177.2" width="25.5" height="40.6" rx="8" fill="rgba(255,255,255,0.12)" stroke="#000" stroke-width="3"/>
<path d="M685.5 219 L655.5 421" fill="none" stroke="#000" stroke-width="3.3" stroke-linecap="round"/>
<path d="M651.8 410.5 L655.3 421.5 L663.3 412" fill="none" stroke="#000" stroke-width="3.3" stroke-linecap="round" stroke-linejoin="round"/>
</svg>
<div class="a" style="left:816.3px;top:170px;width:14px;height:497px;background:#dadada"></div>
<div class="a" style="left:816.3px;top:171px;width:14px;height:13.8px;background:#fff;border:1px solid #c8c8c8"></div>
<div class="a" style="left:816.3px;top:280px;width:14px;height:28.5px;background:#fff;border:1px solid #c8c8c8"></div>
<div class="a" style="left:816.3px;top:653.5px;width:14px;height:13px;background:#fff;border:1px solid #c8c8c8"></div>
<svg class="i" style="left:0;top:0" width="1" height="1">
<path d="M819.8 179.7 l3.5 -3.7 l3.5 3.7 z" fill="#555"/>
<path d="M820 658.5 l3.3 3.5 l3.3 -3.5 z" fill="#555"/>
</svg>
<div class="a" style="left:1px;top:669px;width:830px;height:20px;background:#f3f2f1;border-top:1px solid #d8d8d8;border-radius:0 0 7px 7px"></div>
<div class="t" style="left:8.40px;top:674.07px;font-size:11.5px;line-height:11.5px;color:#444;font-family:'Liberation Sans',sans-serif;transform:scaleX(0.8921);transform-origin:0 0;">Страница 2 из 8</div>
<div class="t" style="left:103.40px;top:674.07px;font-size:11.5px;line-height:11.5px;color:#444;font-family:'Liberation Sans',sans-serif;transform:scaleX(0.8624);transform-origin:0 0;">Число слов: 1639</div>
<div class="t" style="left:230.40px;top:674.07px;font-size:11.5px;line-height:11.5px;color:#444;font-family:'Liberation Sans',sans-serif;transform:scaleX(0.9069);transform-origin:0 0;">английский (США)</div>
<div class="t" style="left:470.80px;top:674.07px;font-size:11.5px;line-height:11.5px;color:#444;font-family:'Liberation Sans',sans-serif;transform:scaleX(0.9099);transform-origin:0 0;">Фокусировка</div>
<div class="t" style="left:787.00px;top:674.07px;font-size:11.5px;line-height:11.5px;color:#444;font-family:'Liberation Sans',sans-serif;transform:scaleX(0.8126);transform-origin:0 0;">100 %</div>
<div class="a" style="left:581.5px;top:669px;width:36.4px;height:20px;background:#d6d6d6"></div>
<svg class="i" style="left:0;top:0" width="1" height="1">
<g fill="none" stroke="#555" stroke-width="1">
<path d="M201.5 673.5 h10.5 v5.5 M201.5 673.5 v10.5 h5.5 M204.5 673.5 v10.5"/><path d="M208.5 679.5 l5 5 M213.5 679.5 l-5 5" stroke-width="1.1"/>
<rect x="337" y="673.5" width="11" height="10"/><path d="M337 676 h11 M339 678.5 h3 M339 680.5 h2.5"/>
<circle cx="345.5" cy="681" r="2.8" fill="#f3f2f1"/><circle cx="345.5" cy="681" r="1" fill="#555"/>
<path d="M456 676 v-2.5 h2.5 M456 682 v2.5 h2.5 M468 676 v-2.5 h-2.5 M468 682 v2.5 h-2.5"/>
<path d="M459.5 674.5 h3.5 l2 2 v7 h-5.5 z"/>
<path d="M557.5 673.5 h5.5 l0.5 0.6 l0.5 -0.6 h5.5 v10.5 h-5.5 l-0.5 0.6 l-0.5 -0.6 h-5.5 z M563.5 674 v10.5"/>
<path d="M559.5 676.3 h2.5 M559.5 678.6 h2.5 M559.5 680.9 h2.5 M565 676.3 h2.5 M565 678.6 h2.5 M565 680.9 h2.5" stroke-width="1.2"/>
<rect x="594.5" y="673.5" width="9.5" height="11.5"/>
<path d="M596.5 676 h5.5 M596.5 678.2 h5.5 M596.5 680.4 h5.5 M596.5 682.6 h5.5" stroke-width="1"/>
<rect x="629.5" y="673.5" width="12" height="10.5"/><path d="M629.5 676 h12 M631.5 678.5 h1 M631.5 680.5 h1 M631.5 682.5 h1"/>
<circle cx="638.5" cy="682" r="3.6" fill="#f3f2f1"/><path d="M635 682 h7 M638.5 678.5 v7"/>
</g>
<path d="M659.6 678.7 h7.3 M767 679 h7.3 M770.6 675.5 v7.3" stroke="#555" stroke-width="1.1"/>
<path d="M671.7 679.5 h90" stroke="#999" stroke-width="1"/>
<rect x="714.9" y="674.1" width="4.8" height="10.1" fill="#666"/>
</svg>
</body></html>
